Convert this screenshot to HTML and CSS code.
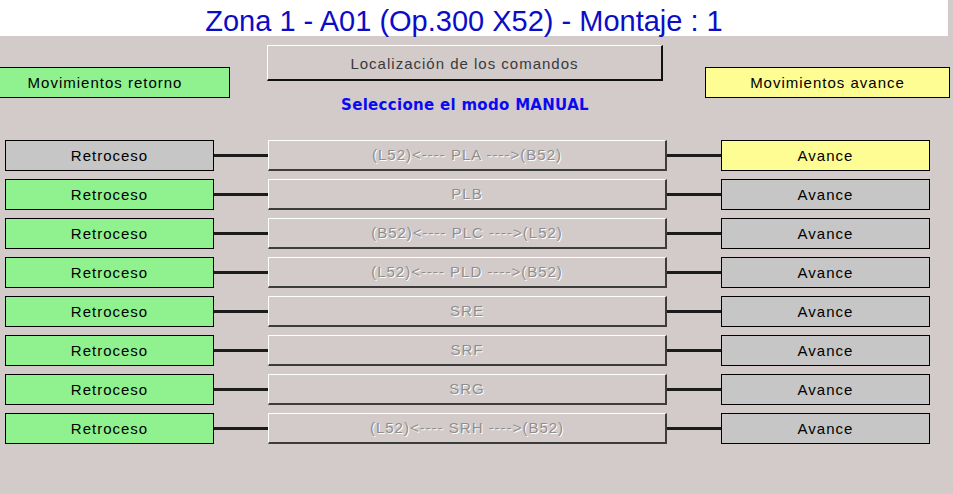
FILE: index.html
```html
<!DOCTYPE html>
<html lang="es">
<head>
<meta charset="utf-8">
<title>Zona 1 - A01</title>
<link rel="stylesheet" href="styles.css">
</head>
<body>
<div class="title">Zona 1 - A01 (Op.300 X52) - Montaje : 1</div>
<div class="top">
  <div class="hdr hdr-left green">Movimientos retorno</div>
  <div class="center">
    <div class="loc">Localización de los comandos</div>
    <div class="select">Seleccione el modo MANUAL</div>
  </div>
  <div class="hdr hdr-right yellow">Movimientos avance</div>
</div>
<div class="rows">
  <div class="row">
    <div class="box grey">Retroceso</div><div class="line"></div>
    <div class="mid">(L52)&lt;---- PLA ----&gt;(B52)</div><div class="line"></div>
    <div class="box yellow">Avance</div>
  </div>
  <div class="row">
    <div class="box green">Retroceso</div><div class="line"></div>
    <div class="mid">PLB</div><div class="line"></div>
    <div class="box grey">Avance</div>
  </div>
  <div class="row">
    <div class="box green">Retroceso</div><div class="line"></div>
    <div class="mid">(B52)&lt;---- PLC ----&gt;(L52)</div><div class="line"></div>
    <div class="box grey">Avance</div>
  </div>
  <div class="row">
    <div class="box green">Retroceso</div><div class="line"></div>
    <div class="mid">(L52)&lt;---- PLD ----&gt;(B52)</div><div class="line"></div>
    <div class="box grey">Avance</div>
  </div>
  <div class="row">
    <div class="box green">Retroceso</div><div class="line"></div>
    <div class="mid">SRE</div><div class="line"></div>
    <div class="box grey">Avance</div>
  </div>
  <div class="row">
    <div class="box green">Retroceso</div><div class="line"></div>
    <div class="mid">SRF</div><div class="line"></div>
    <div class="box grey">Avance</div>
  </div>
  <div class="row">
    <div class="box green">Retroceso</div><div class="line"></div>
    <div class="mid">SRG</div><div class="line"></div>
    <div class="box grey">Avance</div>
  </div>
  <div class="row">
    <div class="box green">Retroceso</div><div class="line"></div>
    <div class="mid">(L52)&lt;---- SRH ----&gt;(B52)</div><div class="line"></div>
    <div class="box grey">Avance</div>
  </div>
</div>
</body>
</html>
```

FILE: styles.css
```css
* { box-sizing: border-box; }
html, body { margin: 0; padding: 0; }
body {
  width: 953px;
  height: 494px;
  overflow: hidden;
  background: #d3caca;
  font-family: "Liberation Sans", Arial, sans-serif;
  font-size: 15px;
  letter-spacing: 1px;
  color: #000;
}
.title {
  width: 948px;
  height: 36px;
  background: #fff;
  color: #0c0cc8;
  font-size: 29px;
  letter-spacing: 0;
  line-height: 30px;
  padding-top: 6px;
  padding-right: 20px;
  text-align: center;
  white-space: nowrap;
}
.top {
  height: 104px;
  padding-top: 9px;
  display: flex;
  align-items: flex-start;
}
.hdr {
  height: 31px;
  margin-top: 22px;
  border: 1px solid #000;
  line-height: 29px;
  text-align: center;
  white-space: nowrap;
}
.hdr-left {
  width: 230px;
  border-left: none;
  padding-right: 19px;
}
.hdr-right {
  width: 245px;
  margin-left: 42px;
}
.center {
  width: 396px;
  margin-left: 37px;
  display: flex;
  flex-direction: column;
  align-items: center;
}
.loc {
  width: 396px;
  height: 36px;
  border-top: 1px solid #fff;
  border-left: 1px solid #fff;
  border-bottom: 2px solid #111;
  border-right: 2px solid #111;
  padding-top: 2px;
  line-height: 31px;
  text-align: center;
  color: #3a3a3a;
  white-space: nowrap;
}
.select {
  margin-top: 15px;
  font-family: "DejaVu Sans", Verdana, sans-serif;
  font-weight: bold;
  font-size: 15px;
  line-height: 18px;
  letter-spacing: 0.3px;
  color: #0a0af0;
  white-space: nowrap;
}
.rows {
  display: flex;
  flex-direction: column;
  gap: 8px;
  padding-left: 5px;
}
.row {
  display: flex;
  align-items: center;
  height: 31px;
}
.box {
  width: 209px;
  height: 31px;
  border: 1px solid #000;
  line-height: 29px;
  text-align: center;
  white-space: nowrap;
}
.line {
  width: 54px;
  height: 3px;
  background: #1c1c1c;
}
.mid {
  width: 399px;
  height: 31px;
  border-top: 1px solid #fff;
  border-left: 1px solid #fff;
  border-bottom: 2px solid #3c3c3c;
  border-right: 2px solid #3c3c3c;
  line-height: 28px;
  text-align: center;
  color: #8e8e8e;
  text-shadow: 1px 1px 0 #fff;
  white-space: nowrap;
}
.green { background: #8ff28f; }
.yellow { background: #fdfd94; }
.grey { background: #c6c6c6; }
```
